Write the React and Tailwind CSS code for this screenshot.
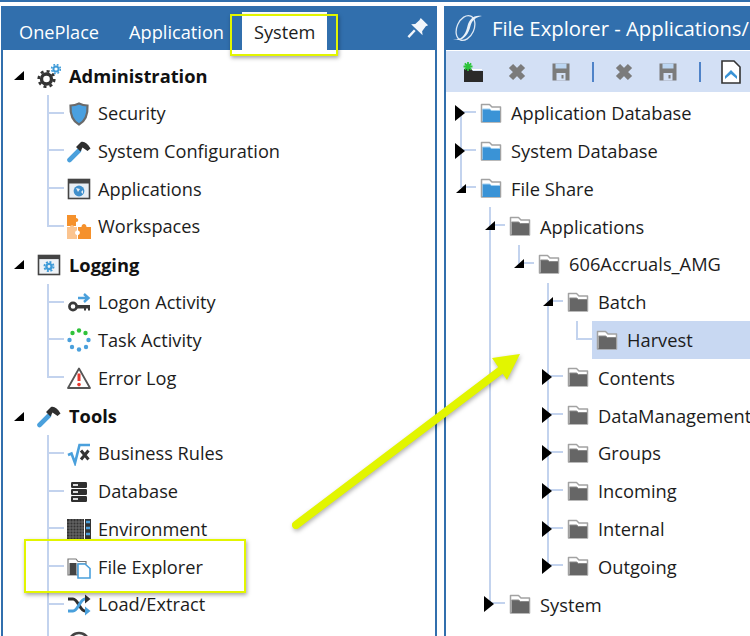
import React from 'react';

const font = { fontFamily: '"Open Sans", "Noto Sans", sans-serif' };

// tree icons, all on a 24 box
function Gear() {
  return (
    <svg viewBox="0 0 24 24" className="w-[24px] h-[24px]">
      <circle cx="9.5" cy="15" r="5" fill="none" stroke="#333" strokeWidth="3.4" />
      <circle cx="9.5" cy="15" r="7.8" fill="none" stroke="#333" strokeWidth="2.6" strokeDasharray="3 3.1" />
      <circle cx="19" cy="5" r="2.6" fill="none" stroke="#3f9bd8" strokeWidth="2" />
      <circle cx="19" cy="5" r="4.4" fill="none" stroke="#3f9bd8" strokeWidth="1.6" strokeDasharray="1.8 1.7" />
    </svg>
  );
}

function ShieldIcon() {
  return (
    <svg viewBox="0 0 24 24" className="w-[24px] h-[24px]">
      <path d="M3.5 3.5 C8 3.5 10 2.5 12 1.5 C14 2.5 16 3.5 20.5 3.5 C21 13 18.5 19 12 22.5 C5.5 19 3 13 3.5 3.5 Z" fill="#4aa0e0" stroke="#6a6a6a" strokeWidth="2.2" />
    </svg>
  );
}

function Hammer() {
  return (
    <svg viewBox="0 0 24 24" className="w-[24px] h-[24px]">
      <path d="M2.5 21 L12 11.5" stroke="#4aa0dc" strokeWidth="4.6" strokeLinecap="round" />
      <path d="M9 8 L14 3 C17 2 20.5 4 23.5 9.5 L20.5 12 L15.5 8.5 L13.5 12.5 Z" fill="#2f2f2f" />
    </svg>
  );
}

function AppWindow() {
  return (
    <svg viewBox="0 0 24 24" className="w-[24px] h-[24px]">
      <rect x="1.5" y="2.5" width="21" height="19" fill="#e8eef4" stroke="#444" strokeWidth="1.6" />
      <rect x="1.5" y="2.5" width="21" height="4" fill="#444" />
      <circle cx="12" cy="14" r="5.4" fill="#3f8fcc" />
      <path d="M9 11 L13 12 L11 15 Z M14 15 L16 13 L16 17 Z" fill="#e8eef4" />
    </svg>
  );
}

function Puzzle() {
  return (
    <svg viewBox="0 0 24 24" className="w-[24px] h-[24px]">
      <path d="M0 0 H9 V3 C12 3 12 7 9 7 V11 H0 Z" fill="#f5912c" />
      <path d="M0 12 H3 C3 9.5 7 9.5 7 12 H10 V15.5 C7.5 15.5 7.5 20 10 20 V24 H0 Z" fill="#fbc48f" />
      <path d="M11 12 H14.5 C14.5 8 19.5 8 19.5 12 H24 V24 H11 V20 C13.5 20 13.5 15.5 11 15.5 Z" fill="#f5912c" />
    </svg>
  );
}

function LogWindow() {
  return (
    <svg viewBox="0 0 24 24" className="w-[24px] h-[24px]">
      <rect x="1.5" y="2.5" width="21" height="19" fill="#eef2f6" stroke="#444" strokeWidth="1.6" />
      <rect x="1.5" y="2.5" width="21" height="3.6" fill="#444" />
      <circle cx="12" cy="13.5" r="2.6" fill="none" stroke="#3f9bd8" strokeWidth="2.4" />
      <circle cx="12" cy="13.5" r="4.6" fill="none" stroke="#3f9bd8" strokeWidth="1.8" strokeDasharray="2 1.6" />
    </svg>
  );
}

function Key() {
  return (
    <svg viewBox="0 0 24 24" className="w-[24px] h-[24px]">
      <path d="M11 7 H21 M17 3 L21.5 7 L17 11" fill="none" stroke="#4aa0dc" strokeWidth="2.4" />
      <circle cx="6" cy="15.5" r="3.6" fill="none" stroke="#3a3a3a" strokeWidth="2.6" />
      <path d="M9.5 14 H23 V19.5 H21 V17.5 H19 V19.5 H17 V17.5 H9.5 Z" fill="#3a3a3a" />
    </svg>
  );
}

function Dots() {
  const dots = [
    [12, 2.5, '#2fc23a'], [18.5, 5, '#2fc23a'], [5.5, 5, '#2fc23a'],
    [21.5, 12, '#4aa0dc'], [2.5, 12, '#4aa0dc'], [19, 19, '#4aa0dc'],
    [5, 19, '#4aa0dc'], [12, 21.5, '#4aa0dc'],
  ];
  return (
    <svg viewBox="0 0 24 24" className="w-[24px] h-[24px]">
      {dots.map(([x, y, c]) => (
        <circle key={`${x}-${y}`} cx={x} cy={y} r="2.2" fill={c} />
      ))}
    </svg>
  );
}

function Warn() {
  return (
    <svg viewBox="0 0 24 24" className="w-[24px] h-[24px]">
      <path d="M12 2.5 L23 22 H1 Z" fill="#fff" stroke="#555" strokeWidth="1.8" strokeLinejoin="round" />
      <path d="M12 7.5 V15" stroke="#e8392f" strokeWidth="3" />
      <circle cx="12" cy="18.6" r="1.8" fill="#e8392f" />
    </svg>
  );
}

function Sqrt() {
  return (
    <svg viewBox="0 0 24 24" className="w-[24px] h-[24px]">
      <path d="M1 13 L4.5 11.5 L8 21 L12.5 3 H23" fill="none" stroke="#4aa0dc" strokeWidth="2.6" />
      <path d="M14 8.5 L21.5 17.5 M21.5 8.5 L14 17.5" stroke="#333" strokeWidth="3" />
    </svg>
  );
}

function Db() {
  return (
    <svg viewBox="0 0 24 24" className="w-[24px] h-[24px]">
      <rect x="4" y="2" width="16" height="6" rx="1.2" fill="#2f2f2f" />
      <rect x="4" y="9" width="16" height="6" rx="1.2" fill="#2f2f2f" />
      <rect x="4" y="16" width="16" height="6" rx="1.2" fill="#2f2f2f" />
      <rect x="6" y="4" width="5" height="2" fill="#ddd" />
      <rect x="6" y="11" width="5" height="2" fill="#ddd" />
      <rect x="6" y="18" width="5" height="2" fill="#ddd" />
    </svg>
  );
}

function Env() {
  return (
    <svg viewBox="0 0 24 24" className="w-[24px] h-[24px]">
      <rect x="0" y="2" width="17" height="21" fill="#333" />
      <path d="M0 5 H17 M0 8 H17 M0 11 H17 M0 14 H17 M0 17 H17 M0 20 H17 M3 2 V23 M6 2 V23 M9 2 V23 M12 2 V23 M15 2 V23" stroke="#777" strokeWidth="0.8" />
      <rect x="18" y="2" width="6" height="21" fill="#333" />
      <path d="M19 5 H23 M19 11 H23 M19 17 H23" stroke="#4aa0dc" strokeWidth="2.4" />
    </svg>
  );
}

function FileFolder() {
  return (
    <svg viewBox="0 0 24 24" className="w-[24px] h-[24px]">
      <path d="M1 4 H9 L11 6.5 H19 V9 H11 V20 H1 Z" fill="#fff" stroke="#777" strokeWidth="1.2" />
      <rect x="2.5" y="8" width="7" height="12" fill="#444" />
      <path d="M11 9 H18 L23 13.5 V23 H11 Z" fill="#fff" stroke="#4aa0dc" strokeWidth="1.6" />
    </svg>
  );
}

function Shuffle() {
  return (
    <svg viewBox="0 0 24 24" className="w-[24px] h-[24px]">
      <path d="M1 6 H6 C11 6 13 18 18 18 H21" fill="none" stroke="#2f2f2f" strokeWidth="3" />
      <path d="M18 13.5 L23.5 18 L18 22.5 Z" fill="#4aa0dc" />
      <path d="M1 18 H6 C11 18 13 6 18 6 H21" fill="none" stroke="#4aa0dc" strokeWidth="3" />
      <path d="M18 1.5 L23.5 6 L18 10.5 Z" fill="#2f2f2f" />
    </svg>
  );
}

function Clock() {
  return (
    <svg viewBox="0 0 24 24" className="w-[24px] h-[24px]">
      <circle cx="12" cy="12" r="10" fill="none" stroke="#444" strokeWidth="2.6" />
    </svg>
  );
}

function Folder({ blue }) {
  return (
    <svg viewBox="0 0 22 22" className="w-[22px] h-[22px]">
      <path d="M1.5 20 V2.5 H9.5 L12 5 H20.5 V20 Z" fill="#fff" stroke="#a2a2a2" strokeWidth="1.5" strokeLinejoin="round" />
      <path d="M2.5 7 H9.5 L11.5 8.5 H20 V20 H2.5 Z" fill={blue ? '#3a93d6' : '#666'} />
      <path d="M2.5 7 H9.5 L11.5 8.5 H20" fill="none" stroke={blue ? '#9fd0f2' : '#8a8a8a'} strokeWidth="1" />
    </svg>
  );
}

function ArrowOpen() {
  return <div className="w-0 h-0 border-l-[10px] border-l-transparent border-b-[9px] border-b-black" />;
}

function ArrowClosed() {
  return <div className="w-0 h-0 border-l-[10px] border-l-black border-y-[8px] border-y-transparent" />;
}

// side panel, group heading
function GroupRow({ icon, label }) {
  return (
    <div className="flex items-center h-[37.8px]">
      <div className="ml-[11px] w-[23px]">
        <ArrowOpen />
      </div>
      <div className="w-[24px] flex justify-center">{icon}</div>
      <span className="ml-[8px] font-bold text-[18.3px] text-[#111]">{label}</span>
    </div>
  );
}

// side panel, leaf item with its connector
function ItemRow({ icon, label, last }) {
  return (
    <div className="flex items-center h-[37.8px]">
      <div className="ml-[44px] w-[17px] self-stretch flex flex-col">
        <div className="h-1/2 border-l-2 border-b-2 border-[#c3d3ee]" />
        <div className={last ? 'h-1/2' : 'h-1/2 border-l-2 border-[#c3d3ee]'} />
      </div>
      <div className="ml-[3px] w-[24px] flex justify-center">{icon}</div>
      <span className="ml-[7px] text-[18.2px] text-[#1c1c1c] whitespace-nowrap">{label}</span>
    </div>
  );
}

// file tree row: guides are the columns of ancestors that still have lines running through
function FileRow({ label, guides = [], top, last, arrow, blue, selected }) {
  return (
    <div className="flex items-center h-[37.8px]">
      <div className="w-[14px] shrink-0" />
      {guides.map((on, i) => (
        <div key={i} className={on ? 'w-[29px] shrink-0 self-stretch border-l-2 border-[#c3d3ee]' : 'w-[29px] shrink-0 self-stretch'} />
      ))}
      <div className="relative w-[16px] shrink-0 self-stretch flex flex-col">
        <div className={top ? 'h-1/2 border-l-2 border-b-2 border-[#c3d3ee]' : 'h-1/2 border-b-2 border-[#c3d3ee]'} />
        <div className={last ? 'h-1/2' : 'h-1/2 border-l-2 border-[#c3d3ee]'} />
        {arrow === 'closed' && (
          <div className="absolute left-[-5px] top-1/2 -translate-y-1/2">
            <ArrowClosed />
          </div>
        )}
        {arrow === 'open' && (
          <div className="absolute left-[-4px] top-[14px]">
            <ArrowOpen />
          </div>
        )}
      </div>
      <div className={selected ? 'flex-1 flex items-center self-stretch pl-[4px] bg-[#c8d8f2]' : 'flex-1 flex items-center self-stretch pl-[4px]'}>
        <Folder blue={blue} />
        <span className="ml-[9px] text-[18.3px] text-[#1c1c1c] whitespace-nowrap">{label}</span>
      </div>
    </div>
  );
}

function Pin() {
  return (
    <svg viewBox="0 0 24 24" className="w-[22px] h-[22px]">
      <path d="M15 1 L23 9 L20.5 10 L16.5 15.5 L17 20 L4.5 8 L9 7.5 L13.5 3.5 Z" fill="#f2f6fb" />
      <path d="M8.5 14.5 L1.5 22" stroke="#f2f6fb" strokeWidth="2.6" />
    </svg>
  );
}

function Logo() {
  return (
    <svg viewBox="0 0 30 28" className="w-[30px] h-[28px] shrink-0">
      <ellipse cx="13.5" cy="14" rx="8.5" ry="13" fill="none" stroke="#dce8f4" strokeWidth="1.3" transform="rotate(24 13.5 14)" />
      <path d="M1 25 C10 27.5 14 19 15.5 12 C17 6 21 0.5 30 2 C24 3 20 6 18.5 12 C16.5 21 10 29 1 25 Z" fill="#eaf1f8" />
    </svg>
  );
}

function CrossBtn() {
  return (
    <svg viewBox="0 0 20 20" className="w-[20px] h-[20px]">
      <path d="M4 4 L16 16 M16 4 L4 16" stroke="#7b7b7b" strokeWidth="6" />
    </svg>
  );
}

function SaveBtn() {
  return (
    <svg viewBox="0 0 20 20" className="w-[20px] h-[20px]">
      <path d="M1.5 1.5 H18.5 V18.5 H1.5 Z" fill="#7b7b7b" />
      <rect x="4.5" y="1.5" width="11" height="5" fill="#bcd6f2" />
      <rect x="5.5" y="11" width="9" height="7.5" fill="#d3e0f5" />
      <rect x="10.5" y="13" width="2" height="3.5" fill="#7b7b7b" />
    </svg>
  );
}

function NewFolderBtn() {
  return (
    <svg viewBox="0 0 22 22" className="w-[22px] h-[22px]">
      <path d="M2 8 H9 L11 10 H21 V21 H2 Z" fill="#2a2a2a" />
      <path d="M10 8.5 H20" stroke="#fff" strokeWidth="1" />
      <path d="M6 1 V10 M1.5 5.5 H10.5 M2.8 2.3 L9.2 8.7 M9.2 2.3 L2.8 8.7" stroke="#2bc43a" strokeWidth="1.8" />
    </svg>
  );
}

function ImportBtn() {
  return (
    <svg viewBox="0 0 20 24" className="w-[20px] h-[24px]">
      <path d="M1 1 H13 L19 7 V23 H1 Z" fill="#fff" stroke="#333" strokeWidth="1.6" />
      <path d="M4 16 L10 10 L16 16 L16 19 L10 14 L4 19 Z" fill="#3a93d6" />
    </svg>
  );
}

function ToolSep() {
  return <div className="w-[2px] h-[20px] bg-[#4f83c8]" />;
}

export default function App() {
  return (
    <div className="relative w-[750px] h-[636px] overflow-hidden bg-white" style={font}>
      <div className="h-[2px] bg-[#316fad]" />
      <div className="flex h-[634px] pt-[4px] pl-[1px]">
        {/* left panel */}
        <div className="w-[436px] shrink-0 flex flex-col">
          <div className="h-[44px] bg-[#316fad] flex items-end pl-[3px] pr-[8px] text-[18.2px] text-white">
            <div className="h-[38px] flex items-center pt-[3px] px-[15px]">OnePlace</div>
            <div className="h-[38px] flex items-center pt-[3px] px-[15px]">Application</div>
            <div className="h-[38px] ml-[3px] flex items-center pt-[3px] px-[12px] bg-white text-[#1c1c1c]">System</div>
            <div className="ml-auto self-center">
              <Pin />
            </div>
          </div>
          <div className="flex-1 border-x-2 border-[#316fad] pt-[7px] overflow-hidden">
            <GroupRow icon={<Gear />} label="Administration" />
            <ItemRow icon={<ShieldIcon />} label="Security" />
            <ItemRow icon={<Hammer />} label="System Configuration" />
            <ItemRow icon={<AppWindow />} label="Applications" />
            <ItemRow icon={<Puzzle />} label="Workspaces" last />
            <GroupRow icon={<LogWindow />} label="Logging" />
            <ItemRow icon={<Key />} label="Logon Activity" />
            <ItemRow icon={<Dots />} label="Task Activity" />
            <ItemRow icon={<Warn />} label="Error Log" last />
            <GroupRow icon={<Hammer />} label="Tools" />
            <ItemRow icon={<Sqrt />} label="Business Rules" />
            <ItemRow icon={<Db />} label="Database" />
            <ItemRow icon={<Env />} label="Environment" />
            <ItemRow icon={<FileFolder />} label="File Explorer" />
            <ItemRow icon={<Shuffle />} label="Load/Extract" />
            <ItemRow icon={<Clock />} label="Time Dimensions" />
          </div>
        </div>

        {/* right panel */}
        <div className="ml-[7px] flex-1 min-w-0 flex flex-col border-l-2 border-[#316fad]">
          <div className="h-[44px] bg-[#316fad] flex items-center pl-[6px] text-white text-[20.3px] whitespace-nowrap overflow-hidden">
            <Logo />
            <span className="ml-[10px] pt-[1px]">File Explorer - Applications/</span>
          </div>
          <div className="mt-px h-[41px] bg-[#d3e0f5] flex items-center pl-[16px] overflow-hidden">
            <NewFolderBtn />
            <div className="ml-[23px]"><CrossBtn /></div>
            <div className="ml-[24px]"><SaveBtn /></div>
            <div className="ml-[21px]"><ToolSep /></div>
            <div className="ml-[20px]"><CrossBtn /></div>
            <div className="ml-[24px]"><SaveBtn /></div>
            <div className="ml-[21px]"><ToolSep /></div>
            <div className="ml-[20px]"><ImportBtn /></div>
          </div>
          <div className="flex-1 pt-[2px] overflow-hidden">
            <FileRow label="Application Database" arrow="closed" blue />
            <FileRow label="System Database" arrow="closed" top blue />
            <FileRow label="File Share" arrow="open" top last blue />
            <FileRow label="Applications" guides={[false]} arrow="open" top />
            <FileRow label="606Accruals_AMG" guides={[false, true]} arrow="open" top last />
            <FileRow label="Batch" guides={[false, true, false]} arrow="open" top />
            <FileRow label="Harvest" guides={[false, true, false, true]} top last selected />
            <FileRow label="Contents" guides={[false, true, false]} arrow="closed" top />
            <FileRow label="DataManagement" guides={[false, true, false]} arrow="closed" top />
            <FileRow label="Groups" guides={[false, true, false]} arrow="closed" top />
            <FileRow label="Incoming" guides={[false, true, false]} arrow="closed" top />
            <FileRow label="Internal" guides={[false, true, false]} arrow="closed" top />
            <FileRow label="Outgoing" guides={[false, true, false]} arrow="closed" top last />
            <FileRow label="System" guides={[false]} arrow="closed" top last />
          </div>
        </div>
      </div>

      {/* callouts drawn over the screenshot */}
      <div className="absolute left-[230px] top-[14px] w-[108px] h-[42px] border-2 border-[#e2f500] shadow-[1px_2px_4px_rgba(0,0,0,0.35)]" />
      <div className="absolute left-[24px] top-[539px] w-[222px] h-[54px] border-2 border-[#e2f500] shadow-[1px_2px_4px_rgba(0,0,0,0.35)]" />
      <svg viewBox="0 0 750 636" className="absolute inset-0 w-[750px] h-[636px] drop-shadow-[1px_2px_2px_rgba(0,0,0,0.3)]">
        <path d="M296 525 L505 367" stroke="#e2f500" strokeWidth="8" strokeLinecap="round" />
        <path d="M520 354 L492 358 L507 380 Z" fill="#e2f500" />
      </svg>
    </div>
  );
}
